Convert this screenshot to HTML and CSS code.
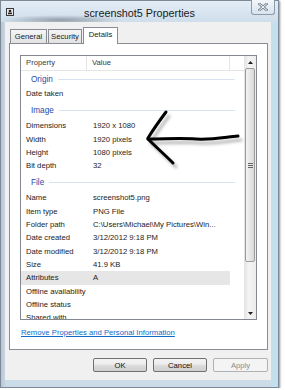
FILE: index.html
```html
<!DOCTYPE html>
<html lang="en">
<head>
    <meta charset="UTF-8">
    <meta name="viewport" content="width=device-width, initial-scale=1.0">
    <title>screenshot5 Properties</title>
    <link rel="stylesheet" href="styles.css">
</head>
<body>
    <div class="window">
        <div class="titlebar">
            <svg class="app-icon" width="8" height="8" viewBox="0 0 8 8">
                <rect x="0.5" y="0.5" width="7" height="7" fill="#e8e8e8" stroke="#3a3a3a"/>
                <circle cx="4" cy="3" r="1.3" fill="#222"/>
                <rect x="2" y="4.6" width="4" height="1.6" fill="#222"/>
            </svg>
            <div class="title">screenshot5 Properties</div>
            <div class="close">
                <svg width="10" height="8" viewBox="0 0 10 8">
                    <path d="M1.5 1 L8.5 7 M8.5 1 L1.5 7" stroke="#7b8793" stroke-width="2.6" stroke-linecap="square"/>
                    <path d="M1.5 1 L8.5 7 M8.5 1 L1.5 7" stroke="#f4f6f8" stroke-width="1" stroke-linecap="square"/>
                </svg>
            </div>
        </div>

        <div class="client">
            <div class="tabs">
                <div class="tab">General</div>
                <div class="tab">Security</div>
                <div class="tab active">Details</div>
            </div>

            <div class="panel">
                <div class="list">
                    <div class="rows">
                        <div class="head">
                            <span class="col-prop">Property</span>
                            <span class="col-val">Value</span>
                        </div>
                        <div class="group first"><span>Origin</span></div>
                        <div class="row"><span class="col-prop">Date taken</span><span class="col-val"></span></div>
                        <div class="group"><span>Image</span></div>
                        <div class="row"><span class="col-prop">Dimensions</span><span class="col-val">1920 x 1080</span></div>
                        <div class="row"><span class="col-prop">Width</span><span class="col-val">1920 pixels</span></div>
                        <div class="row"><span class="col-prop">Height</span><span class="col-val">1080 pixels</span></div>
                        <div class="row"><span class="col-prop">Bit depth</span><span class="col-val">32</span></div>
                        <div class="group"><span>File</span></div>
                        <div class="row"><span class="col-prop">Name</span><span class="col-val">screenshot5.png</span></div>
                        <div class="row"><span class="col-prop">Item type</span><span class="col-val">PNG File</span></div>
                        <div class="row"><span class="col-prop">Folder path</span><span class="col-val">C:\Users\Michael\My Pictures\Win...</span></div>
                        <div class="row"><span class="col-prop">Date created</span><span class="col-val">3/12/2012 9:18 PM</span></div>
                        <div class="row"><span class="col-prop">Date modified</span><span class="col-val">3/12/2012 9:18 PM</span></div>
                        <div class="row"><span class="col-prop">Size</span><span class="col-val">41.9 KB</span></div>
                        <div class="row sel"><span class="col-prop">Attributes</span><span class="col-val">A</span></div>
                        <div class="row"><span class="col-prop">Offline availability</span><span class="col-val"></span></div>
                        <div class="row"><span class="col-prop">Offline status</span><span class="col-val"></span></div>
                        <div class="row"><span class="col-prop">Shared with</span><span class="col-val"></span></div>
                    </div>
                    <div class="scrollbar">
                        <div class="sb-btn">
                            <svg width="5" height="3" viewBox="0 0 5 3"><path d="M0 3 L2.5 0 L5 3 Z" fill="#222"/></svg>
                        </div>
                        <div class="thumb">
                            <span class="grip"></span>
                        </div>
                        <div class="track"></div>
                        <div class="sb-btn">
                            <svg width="5" height="3" viewBox="0 0 5 3"><path d="M0 0 L5 0 L2.5 3 Z" fill="#222"/></svg>
                        </div>
                    </div>
                </div>
                <a class="link" href="#">Remove Properties and Personal Information</a>
            </div>

            <div class="buttons">
                <button class="btn">OK</button>
                <button class="btn">Cancel</button>
                <button class="btn apply" disabled>Apply</button>
            </div>
        </div>

        <!-- hand drawn arrow laid over the list -->
        <svg class="arrow" width="285" height="390" viewBox="0 0 285 390">
            <defs>
                <filter id="soft" x="-20%" y="-20%" width="140%" height="140%">
                    <feGaussianBlur stdDeviation="1.4"/>
                </filter>
            </defs>
            <g transform="translate(3 4)" stroke="#666" stroke-width="3" fill="none" stroke-linecap="round" opacity="0.45" filter="url(#soft)">
                <path d="M238 136 C226 137 212 140 196 139 C180 138 165 139 148 139"/>
                <path d="M166 112 C160 120 153 130 148 138"/>
                <path d="M148 139 C156 147 165 155 173 163"/>
            </g>
            <g stroke="#000" stroke-width="3" fill="none" stroke-linecap="round">
                <path d="M238 136 C226 137 212 140 196 139 C180 138 165 139 148 139"/>
                <path d="M166 112 C160 120 153 130 148 138"/>
                <path d="M148 139 C156 147 165 155 173 163"/>
            </g>
        </svg>
    </div>
</body>
</html>
```

FILE: styles.css
```css
* {
    margin: 0;
    padding: 0;
    box-sizing: border-box;
}
body {
    background: #fff;
    font-family: "Liberation Sans", Arial, sans-serif;
    font-size: 7.7px;
    color: #1b1b1b;
}
.window {
    position: relative;
    width: 279px;
    height: 388px;
    border: 1px solid #7d8996;
    background: linear-gradient(to right, #b9c5d1 0, #cbdbe8 5px, #cbdbe8 270px, #c4e0ee 271px, #c4e0ee 100%);
    box-shadow: 1px 1px 2px rgba(0, 0, 0, .45);
    display: flex;
    flex-direction: column;
}
.titlebar {
    height: 21px;
    display: grid;
    grid-template-columns: 1fr auto 1fr;
    align-items: center;
    background:
        radial-gradient(ellipse 60px 5px at 60px 19px, rgba(70, 80, 90, .45), rgba(70, 80, 90, 0)),
        linear-gradient(#e3edf6, #cfdeeb);
}
.app-icon {
    margin-left: 5px;
    display: block;
}
.title {
    font-size: 10.8px;
    color: #1a1a1a;
    padding-top: 2px;
}
.close {
    justify-self: end;
    align-self: start;
    margin-top: -1px;
    margin-right: 3px;
    width: 24px;
    height: 15px;
    border: 1px solid #8d9aa8;
    border-top: none;
    border-radius: 0 0 3px 3px;
    background: linear-gradient(#f2f6fa, #d8e3ed);
    display: flex;
    justify-content: center;
    align-items: center;
}
.client {
    width: 266px;
    height: 358px;
    margin-left: 4px;
    padding: 0 3px 0 4px;
    background: #f0f0f0;
}
.tabs {
    height: 21px;
    padding-left: 1px;
    display: flex;
    align-items: flex-end;
    gap: 1px;
}
.tab {
    height: 14px;
    border: 1px solid #898c95;
    border-bottom: none;
    background: linear-gradient(#f5f5f5, #e2e2e2);
    text-align: center;
    line-height: 13px;
    color: #1b1b1b;
}
.tab:nth-child(1) { width: 37px; }
.tab:nth-child(2) { width: 34px; }
.tab.active {
    position: relative;
    width: 35px;
    height: 17px;
    margin-bottom: -1px;
    background: #fff;
    line-height: 14px;
    z-index: 1;
}
.panel {
    height: 307px;
    border: 1px solid #898c95;
    background: #fff;
    padding: 11px 10px 0;
}
.list {
    height: 265px;
    border: 1px solid #828790;
    display: flex;
}
.rows {
    flex: 1;
    overflow: hidden;
}
.head {
    height: 15px;
    display: flex;
    border-bottom: 1px solid #e5e5e5;
    color: #3c3c3c;
}
.head span {
    line-height: 14px;
    border-right: 1px solid #e5e5e5;
}
.col-prop {
    width: 66px;
    padding-left: 5px;
    white-space: nowrap;
    overflow: hidden;
}
.col-val {
    width: 143px;
    padding-left: 6px;
    white-space: nowrap;
}
.head .col-val {
    padding-left: 5px;
}
.row {
    height: 13.35px;
    width: 209px;
    display: flex;
    align-items: center;
}
.row .col-prop {
    overflow: visible;
}
.row.sel {
    background: #e6e6e6;
}
.group {
    height: 18.6px;
    display: flex;
    align-items: center;
    padding-left: 10px;
    padding-top: 1px;
    color: #2a48a8;
    font-size: 8.2px;
}
.group.first {
    height: 16.3px;
}
.group::after {
    content: "";
    flex: 1;
    height: 1px;
    background: #d9e1f2;
    margin: 0 9px 0 5px;
}
.scrollbar {
    width: 12px;
    display: flex;
    flex-direction: column;
    background: linear-gradient(to right, #e3e3e3, #f4f4f4 40%, #ececec);
}
.sb-btn {
    height: 12px;
    display: flex;
    justify-content: center;
    align-items: center;
}
.thumb {
    height: 194px;
    margin: 0 1px;
    border: 1px solid #9a9a9a;
    border-radius: 2px;
    background: linear-gradient(to right, #f3f3f3, #e6e6e6 50%, #d9d9d9);
    display: flex;
    justify-content: center;
    align-items: center;
}
.grip {
    width: 5px;
    height: 5px;
    border-top: 1px solid #666;
    border-bottom: 1px solid #666;
    position: relative;
}
.grip::after {
    content: "";
    position: absolute;
    left: 0;
    right: 0;
    top: 1px;
    border-top: 1px solid #666;
}
.track {
    flex: 1;
}
.link {
    display: block;
    margin-top: 8px;
    padding-left: 1px;
    line-height: 10px;
    color: #0f6bc8;
    text-decoration: underline;
}
.buttons {
    margin-top: 8px;
    display: flex;
    justify-content: flex-end;
    gap: 6px;
}
.btn {
    width: 54px;
    height: 14px;
    border: 1px solid #707070;
    border-radius: 2px;
    background: linear-gradient(#f4f4f4 0, #ebebeb 45%, #dddddd 50%, #cfcfcf 100%);
    font-family: "Liberation Sans", Arial, sans-serif;
    font-size: 7.7px;
    color: #111;
}
.btn.apply {
    width: 55px;
    border-color: #adb2b5;
    background: #f4f4f4;
    color: #8c8c8c;
}
.arrow {
    position: absolute;
    left: -1px;
    top: -1px;
    pointer-events: none;
}
```
